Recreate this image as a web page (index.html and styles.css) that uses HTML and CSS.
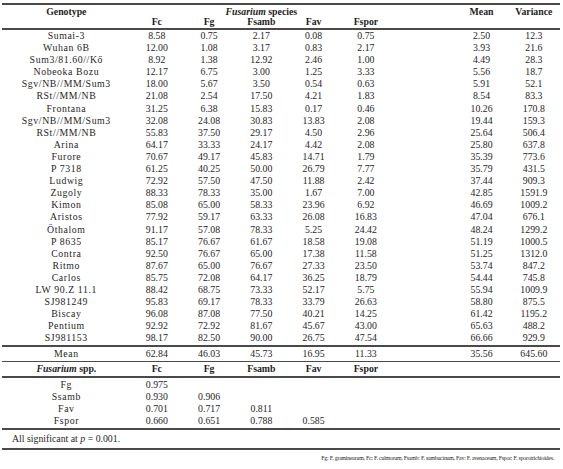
FILE: index.html
```html
<!DOCTYPE html>
<html>
<head>
<meta charset="utf-8">
<link rel="stylesheet" href="styles.css">
</head>
<body>
<div class="page">
<table class="data">
  <colgroup>
    <col class="c-gen"><col class="c-num"><col class="c-num"><col class="c-num"><col class="c-num"><col class="c-num"><col class="c-gap"><col class="c-num"><col class="c-var">
  </colgroup>
  <thead>
    <tr class="h1">
      <th>Genotype</th>
      <th colspan="5"><i>Fusarium</i> species</th>
      <th></th>
      <th>Mean</th>
      <th>Variance</th>
    </tr>
    <tr class="h2">
      <th></th><th>Fc</th><th>Fg</th><th>Fsamb</th><th>Fav</th><th>Fspor</th><th></th><th></th><th></th>
    </tr>
  </thead>
  <tbody class="rows">
    <tr><td class="g">Sumai-3</td><td>8.58</td><td>0.75</td><td>2.17</td><td>0.08</td><td>0.75</td><td></td><td>2.50</td><td>12.3</td></tr>
    <tr><td class="g">Wuhan 6B</td><td>12.00</td><td>1.08</td><td>3.17</td><td>0.83</td><td>2.17</td><td></td><td>3.93</td><td>21.6</td></tr>
    <tr><td class="g">Sum3/81.60//Kő</td><td>8.92</td><td>1.38</td><td>12.92</td><td>2.46</td><td>1.00</td><td></td><td>4.49</td><td>28.3</td></tr>
    <tr><td class="g">Nobeoka Bozu</td><td>12.17</td><td>6.75</td><td>3.00</td><td>1.25</td><td>3.33</td><td></td><td>5.56</td><td>18.7</td></tr>
    <tr><td class="g">Sgv/NB//MM/Sum3</td><td>18.00</td><td>5.67</td><td>3.50</td><td>0.54</td><td>0.63</td><td></td><td>5.91</td><td>52.1</td></tr>
    <tr><td class="g">RSt//MM/NB</td><td>21.08</td><td>2.54</td><td>17.50</td><td>4.21</td><td>1.83</td><td></td><td>8.54</td><td>83.3</td></tr>
    <tr><td class="g">Frontana</td><td>31.25</td><td>6.38</td><td>15.83</td><td>0.17</td><td>0.46</td><td></td><td>10.26</td><td>170.8</td></tr>
    <tr><td class="g">Sgv/NB//MM/Sum3</td><td>32.08</td><td>24.08</td><td>30.83</td><td>13.83</td><td>2.08</td><td></td><td>19.44</td><td>159.3</td></tr>
    <tr><td class="g">RSt//MM/NB</td><td>55.83</td><td>37.50</td><td>29.17</td><td>4.50</td><td>2.96</td><td></td><td>25.64</td><td>506.4</td></tr>
    <tr><td class="g">Arina</td><td>64.17</td><td>33.33</td><td>24.17</td><td>4.42</td><td>2.08</td><td></td><td>25.80</td><td>637.8</td></tr>
    <tr><td class="g">Furore</td><td>70.67</td><td>49.17</td><td>45.83</td><td>14.71</td><td>1.79</td><td></td><td>35.39</td><td>773.6</td></tr>
    <tr><td class="g">P 7318</td><td>61.25</td><td>40.25</td><td>50.00</td><td>26.79</td><td>7.77</td><td></td><td>35.79</td><td>431.5</td></tr>
    <tr><td class="g">Ludwig</td><td>72.92</td><td>57.50</td><td>47.50</td><td>11.88</td><td>2.42</td><td></td><td>37.44</td><td>909.3</td></tr>
    <tr><td class="g">Zugoly</td><td>88.33</td><td>78.33</td><td>35.00</td><td>1.67</td><td>7.00</td><td></td><td>42.85</td><td>1591.9</td></tr>
    <tr><td class="g">Kimon</td><td>85.08</td><td>65.00</td><td>58.33</td><td>23.96</td><td>6.92</td><td></td><td>46.69</td><td>1009.2</td></tr>
    <tr><td class="g">Aristos</td><td>77.92</td><td>59.17</td><td>63.33</td><td>26.08</td><td>16.83</td><td></td><td>47.04</td><td>676.1</td></tr>
    <tr><td class="g">Öthalom</td><td>91.17</td><td>57.08</td><td>78.33</td><td>5.25</td><td>24.42</td><td></td><td>48.24</td><td>1299.2</td></tr>
    <tr><td class="g">P 8635</td><td>85.17</td><td>76.67</td><td>61.67</td><td>18.58</td><td>19.08</td><td></td><td>51.19</td><td>1000.5</td></tr>
    <tr><td class="g">Contra</td><td>92.50</td><td>76.67</td><td>65.00</td><td>17.38</td><td>11.58</td><td></td><td>51.25</td><td>1312.0</td></tr>
    <tr><td class="g">Ritmo</td><td>87.67</td><td>65.00</td><td>76.67</td><td>27.33</td><td>23.50</td><td></td><td>53.74</td><td>847.2</td></tr>
    <tr><td class="g">Carlos</td><td>85.75</td><td>72.08</td><td>64.17</td><td>36.25</td><td>18.79</td><td></td><td>54.44</td><td>745.8</td></tr>
    <tr><td class="g">LW 90.Z 11.1</td><td>88.42</td><td>68.75</td><td>73.33</td><td>52.17</td><td>5.75</td><td></td><td>55.94</td><td>1009.9</td></tr>
    <tr><td class="g">SJ981249</td><td>95.83</td><td>69.17</td><td>78.33</td><td>33.79</td><td>26.63</td><td></td><td>58.80</td><td>875.5</td></tr>
    <tr><td class="g">Biscay</td><td>96.08</td><td>87.08</td><td>77.50</td><td>40.21</td><td>14.25</td><td></td><td>61.42</td><td>1195.2</td></tr>
    <tr><td class="g">Pentium</td><td>92.92</td><td>72.92</td><td>81.67</td><td>45.67</td><td>43.00</td><td></td><td>65.63</td><td>488.2</td></tr>
    <tr class="last"><td class="g">SJ981153</td><td>98.17</td><td>82.50</td><td>90.00</td><td>26.75</td><td>47.54</td><td></td><td>66.66</td><td>929.9</td></tr>
  </tbody>
  <tbody class="mean">
    <tr><td class="g">Mean</td><td>62.84</td><td>46.03</td><td>45.73</td><td>16.95</td><td>11.33</td><td></td><td>35.56</td><td>645.60</td></tr>
  </tbody>
  <tbody class="corr-head">
    <tr><th><i>Fusarium</i> spp.</th><th>Fc</th><th>Fg</th><th>Fsamb</th><th>Fav</th><th>Fspor</th><th></th><th></th><th></th></tr>
  </tbody>
  <tbody class="corr">
    <tr class="first"><td class="g">Fg</td><td>0.975</td><td></td><td></td><td></td><td></td><td></td><td></td><td></td></tr>
    <tr><td class="g">Ssamb</td><td>0.930</td><td>0.906</td><td></td><td></td><td></td><td></td><td></td><td></td></tr>
    <tr><td class="g">Fav</td><td>0.701</td><td>0.717</td><td>0.811</td><td></td><td></td><td></td><td></td><td></td></tr>
    <tr class="last"><td class="g">Fspor</td><td>0.660</td><td>0.651</td><td>0.788</td><td>0.585</td><td></td><td></td><td></td><td></td></tr>
  </tbody>
  <tbody class="note">
    <tr><td colspan="9">All significant at <i>p</i> = 0.001.</td></tr>
  </tbody>
</table>
<p class="foot">Fg: F. graminearum, Fc: F. culmorum, Fsamb: F. sambucinum, Fav: F. avenaceum, Fspor: F. sporotrichioides.</p>
</div>
</body>
</html>
```

FILE: styles.css
```css
html, body {
  margin: 0;
  padding: 0;
  background: #ffffff;
}

.page {
  padding: 3px 3px 0 2px;
  font-family: "Liberation Serif", "DejaVu Serif", serif;
  color: #1e1e1e;
}

.data {
  width: 558px;
  table-layout: fixed;
  border-collapse: collapse;
  font-size: 9.8px;
  line-height: 12px;
}

.c-gen { width: 128px; }
.c-num { width: 52px; }
.c-gap { width: 63px; }
.c-var { width: 52px; }

.data th, .data td {
  padding: 0;
  text-align: center;
  white-space: nowrap;
}

.data th {
  font-weight: bold;
}

.data td.g {
  letter-spacing: 0.6px;
}

.data thead tr.h1 th {
  border-top: 2px solid #4a4a4a;
  padding-top: 2px;
  height: 9px;
  line-height: 10px;
}

.data thead tr.h2 th {
  border-bottom: 2px solid #4a4a4a;
  padding-top: 0;
  padding-bottom: 1px;
  height: 10px;
  line-height: 10px;
}

.rows td {
  height: 12.1px;
  line-height: 12.1px;
}

.rows tr.last td {
  border-bottom: 2px solid #4a4a4a;
  padding-bottom: 1px;
}

.mean td {
  height: 14px;
  border-bottom: 1px solid #4a4a4a;
}

.corr-head th {
  height: 14px;
  border-bottom: 2px solid #4a4a4a;
}

.corr td {
  height: 12px;
}

.corr tr.first td {
  padding-top: 1px;
}

.corr tr.last td {
  border-bottom: 2px solid #4a4a4a;
  padding-bottom: 1px;
}

.note td {
  text-align: left;
  padding-left: 10px;
  height: 18px;
  border-bottom: 2px solid #4a4a4a;
}

.foot {
  margin: 3px 0 0 0;
  padding-right: 6px;
  text-align: right;
  font-size: 5.8px;
  letter-spacing: -0.2px;
  line-height: 10px;
}
```
